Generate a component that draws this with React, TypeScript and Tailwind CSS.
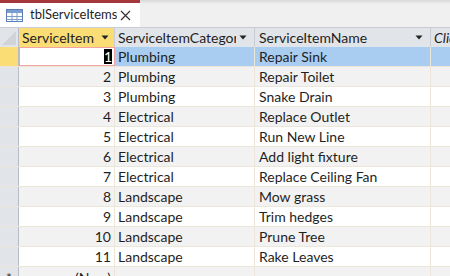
import React from 'react'

const rows = [
  [1, 'Plumbing', 'Repair Sink'],
  [2, 'Plumbing', 'Repair Toilet'],
  [3, 'Plumbing', 'Snake Drain'],
  [4, 'Electrical', 'Replace Outlet'],
  [5, 'Electrical', 'Run New Line'],
  [6, 'Electrical', 'Add light fixture'],
  [7, 'Electrical', 'Replace Ceiling Fan'],
  [8, 'Landscape', 'Mow grass'],
  [9, 'Landscape', 'Trim hedges'],
  [10, 'Landscape', 'Prune Tree'],
  [11, 'Landscape', 'Rake Leaves'],
] as const

function Arrow() {
  return (
    <svg width="8" height="5" viewBox="0 0 8 5" className="shrink-0 ml-[3px]">
      <path d="M0.5 0.5 H7.5 L4 4.5 Z" fill="#222" />
    </svg>
  )
}

function TableIcon() {
  return (
    <svg width="17" height="13" viewBox="0 0 17 13" className="shrink-0">
      <rect x="0.5" y="0.5" width="16" height="12" fill="#fff" stroke="#5b7fb5" />
      <rect x="1" y="1" width="15" height="3" fill="#7d9cd0" />
      <path d="M1 7.5 H16 M1 10.5 H16 M6 4 V12 M11 4 V12" stroke="#7d9cd0" strokeWidth="1" />
    </svg>
  )
}

export default function App() {
  return (
    <div className="w-[450px] h-[276px] overflow-hidden bg-[#f0f0f0] text-[14px] text-[#1f1f1f]" style={{ fontFamily: 'Lato, "Open Sans", sans-serif' }}>
      {/* tab strip */}
      <div className="flex h-[27px] bg-gradient-to-b from-[#d8d8d8] via-[#f0f0f0] to-[#f0f0f0] via-[15%]">
        <div className="w-[140px] bg-white border-t-[3px] border-[#a4373a] flex items-center pl-[6px]">
          <TableIcon />
          <span className="ml-[7px] whitespace-nowrap overflow-hidden text-[13px]">tblServiceItems</span>
          <svg width="11" height="11" viewBox="0 0 11 11" className="shrink-0 ml-auto mr-[9px]">
            <path d="M1 1 L10 10 M10 1 L1 10" stroke="#333" strokeWidth="1.2" />
          </svg>
        </div>
      </div>

      {/* header */}
      <div className="flex h-[20px] bg-[#e1e4e9] border-t border-[#c9ccd2]">
        <div className="w-[19px] shrink-0 border-r border-[#b8bcc4] relative overflow-hidden">
          <svg width="18" height="19" viewBox="0 0 18 19" className="absolute inset-0">
            <path d="M16 3 L16 17 L2 17 Z" fill="#d0d3d8" />
          </svg>
        </div>
        <div className="w-[96px] shrink-0 bg-[#fbdd76] border-r border-[#c9ccd2] flex items-center pl-[3px] pr-[5px]">
          <span className="flex-1 overflow-hidden whitespace-nowrap">ServiceItem</span>
          <Arrow />
        </div>
        <div className="w-[140px] shrink-0 border-r border-[#c9ccd2] flex items-center pl-[3px] pr-[7px]">
          <span className="flex-1 overflow-hidden whitespace-nowrap">ServiceItemCategory</span>
          <Arrow />
        </div>
        <div className="w-[176px] shrink-0 border-r border-[#c9ccd2] flex items-center pl-[4px] pr-[7px]">
          <span className="flex-1 overflow-hidden whitespace-nowrap">ServiceItemName</span>
          <Arrow />
        </div>
        <div className="flex-1 flex items-center pl-[3px] italic whitespace-nowrap overflow-hidden">Click to Add</div>
      </div>

      {/* rows */}
      {rows.map(([id, cat, name], i) => {
        const sel = i === 0
        const bg = sel ? 'bg-[#a9cdf1]' : i % 2 === 1 ? 'bg-[#f2f2f2]' : 'bg-white'
        return (
          <div key={id} className="flex h-[20px] border-b border-[#ebe6d8]">
            <div className={`w-[19px] shrink-0 border-r border-[#b8bcc4] ${sel ? 'bg-[#fbdd76]' : 'bg-[#e1e4e9]'}`} />
            {sel ? (
              <div className="w-[96px] shrink-0 bg-white border border-[#f4a3a3] flex items-center justify-end pr-[2px]">
                <span className="bg-black text-white leading-[15px]">1</span>
              </div>
            ) : (
              <div className={`w-[96px] shrink-0 ${bg} border-r border-[#ebe6d8] flex items-center justify-end pr-[3px]`}>{id}</div>
            )}
            <div className={`w-[140px] shrink-0 ${bg} border-r border-[#ebe6d8] flex items-center pl-[3px] whitespace-nowrap`}>{cat}</div>
            <div className={`w-[176px] shrink-0 ${bg} border-r border-[#ebe6d8] flex items-center pl-[4px] whitespace-nowrap`}>{name}</div>
            <div className={`flex-1 ${bg}`} />
          </div>
        )
      })}

      {/* new row */}
      <div className="flex h-[20px]">
        <div className="w-[19px] shrink-0 border-r border-[#b8bcc4] bg-[#e1e4e9] flex items-center justify-center text-[#444]">*</div>
        <div className="w-[96px] shrink-0 bg-[#f2f2f2] border-r border-[#ebe6d8] flex items-center justify-end pr-[3px]">(New)</div>
        <div className="w-[140px] shrink-0 bg-[#f2f2f2] border-r border-[#ebe6d8]" />
        <div className="w-[176px] shrink-0 bg-[#f2f2f2] border-r border-[#ebe6d8]" />
        <div className="flex-1 bg-[#f2f2f2]" />
      </div>
    </div>
  )
}
